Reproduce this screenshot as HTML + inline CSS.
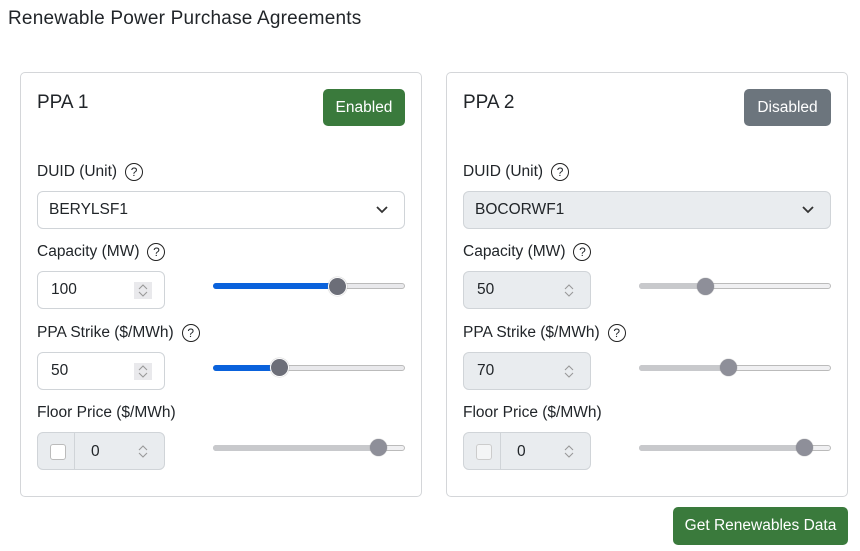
<!DOCTYPE html>
<html><head><meta charset="utf-8"><style>
*{box-sizing:border-box;margin:0;padding:0}
body{width:860px;height:551px;background:#fff;font-family:"Liberation Sans",Arial,sans-serif;color:#212529;position:relative;overflow:hidden}
.a{position:absolute}
.title{left:8px;top:8px;font-size:19px;letter-spacing:0.2px}
.card{border:1px solid #d4d6d9;border-radius:5px;background:#fff}
.h{font-size:19px}
.btn{color:#fff;font-size:15.5px;border-radius:5px;display:flex;align-items:center;justify-content:center}
.lbl{font-size:15.5px;display:flex;align-items:center;gap:8px}
.q{width:18px;height:18px;border:1.5px solid #222;border-radius:50%;font-size:12px;display:flex;align-items:center;justify-content:center}
.inp{border:1px solid #d0d4d8;border-radius:6px;font-size:15.5px;display:flex;align-items:center}
.dis{background:#e9ecef}
.spin{position:absolute;right:12px;top:10px;width:18px;height:17px}
.track{height:6px;border-radius:3px;border:1px solid #bbb;background:#e9e9ec}
.thumb{width:19px;height:19px;border-radius:50%;background:#6c6e78;border:1.5px solid #fff;box-shadow:0 0 1px #888}
</style></head><body>
<svg width="0" height="0" style="position:absolute"><defs><g id="sp"><path d="M5 7l4-4 4 4M5 10l4 4 4-4" fill="none" stroke="#999" stroke-width="1.1"/></g></defs></svg>
<div class="a title">Renewable Power Purchase Agreements</div>

<!-- Card 1 -->
<div class="a card" style="left:20px;top:72px;width:402px;height:425px"></div>
<div class="a h" style="left:37px;top:92px">PPA 1</div>
<div class="a btn" style="left:323px;top:89px;width:82px;height:37px;background:#3a7a3c">Enabled</div>
<div class="a lbl" style="left:37px;top:163px">DUID (Unit) <span class="q">?</span></div>
<div class="a inp" style="left:37px;top:191px;width:368px;height:38px;padding-left:11px">BERYLSF1
<svg class="a" style="right:16px;top:14px" width="12" height="8" viewBox="0 0 12 8"><path d="M1 1l5 5 5-5" fill="none" stroke="#333" stroke-width="1.8"/></svg></div>
<div class="a lbl" style="left:37px;top:243px">Capacity (MW) <span class="q">?</span></div>
<div class="a inp" style="left:37px;top:271px;width:128px;height:38px;padding-left:13px">100<svg class="spin" viewBox="0 0 18 17" style="background:#e9e9ec"><use href="#sp"/></svg></div>
<div class="a track" style="left:213px;top:283px;width:192px"></div>
<div class="a" style="left:213px;top:283px;width:125px;height:6px;border-radius:3px;background:#0a62dc"></div>
<div class="a thumb" style="left:328px;top:277px"></div>
<div class="a lbl" style="left:37px;top:324px">PPA Strike ($/MWh) <span class="q">?</span></div>
<div class="a inp" style="left:37px;top:352px;width:128px;height:38px;padding-left:13px">50<svg class="spin" viewBox="0 0 18 17" style="background:#e9e9ec"><use href="#sp"/></svg></div>
<div class="a track" style="left:213px;top:365px;width:192px"></div>
<div class="a" style="left:213px;top:365px;width:67px;height:6px;border-radius:3px;background:#0a62dc"></div>
<div class="a thumb" style="left:270px;top:358px"></div>
<div class="a lbl" style="left:37px;top:404px">Floor Price ($/MWh)</div>
<div class="a inp dis" style="left:37px;top:432px;width:128px;height:38px"><div class="a" style="left:12px;top:11px;width:16px;height:16px;border:1px solid #bbb;border-radius:3px;background:#fff"></div><div class="a" style="left:36px;top:0;width:1px;height:36px;background:#d0d4d8"></div><span class="a" style="left:53px;top:10px">0</span><svg class="spin" viewBox="0 0 18 17"><use href="#sp"/></svg></div>
<div class="a track" style="left:213px;top:445px;width:192px;background:#f0f0f2"></div>
<div class="a" style="left:213px;top:445px;width:166px;height:6px;border-radius:3px;background:#c8c9cc"></div>
<div class="a thumb" style="left:370px;top:439px;width:17px;height:17px;background:#8e8f99;border:none"></div>

<!-- Card 2 -->
<div class="a card" style="left:446px;top:72px;width:402px;height:425px"></div>
<div class="a h" style="left:463px;top:92px">PPA 2</div>
<div class="a btn" style="left:744px;top:89px;width:87px;height:37px;background:#6c757d">Disabled</div>
<div class="a lbl" style="left:463px;top:163px">DUID (Unit) <span class="q">?</span></div>
<div class="a inp dis" style="left:463px;top:191px;width:368px;height:38px;padding-left:11px">BOCORWF1
<svg class="a" style="right:16px;top:14px" width="12" height="8" viewBox="0 0 12 8"><path d="M1 1l5 5 5-5" fill="none" stroke="#333" stroke-width="1.8"/></svg></div>
<div class="a lbl" style="left:463px;top:243px">Capacity (MW) <span class="q">?</span></div>
<div class="a inp dis" style="left:463px;top:271px;width:128px;height:38px;padding-left:13px">50<svg class="spin" viewBox="0 0 18 17"><use href="#sp"/></svg></div>
<div class="a track" style="left:639px;top:283px;width:192px;background:#f0f0f2"></div>
<div class="a" style="left:639px;top:283px;width:67px;height:6px;border-radius:3px;background:#c8c9cc"></div>
<div class="a thumb" style="left:697px;top:278px;width:17px;height:17px;background:#8e8f99;border:none"></div>
<div class="a lbl" style="left:463px;top:324px">PPA Strike ($/MWh) <span class="q">?</span></div>
<div class="a inp dis" style="left:463px;top:352px;width:128px;height:38px;padding-left:13px">70<svg class="spin" viewBox="0 0 18 17"><use href="#sp"/></svg></div>
<div class="a track" style="left:639px;top:365px;width:192px;background:#f0f0f2"></div>
<div class="a" style="left:639px;top:365px;width:90px;height:6px;border-radius:3px;background:#c8c9cc"></div>
<div class="a thumb" style="left:720px;top:359px;width:17px;height:17px;background:#8e8f99;border:none"></div>
<div class="a lbl" style="left:463px;top:404px">Floor Price ($/MWh)</div>
<div class="a inp dis" style="left:463px;top:432px;width:128px;height:38px"><div class="a" style="left:12px;top:11px;width:16px;height:16px;border:1px solid #ccc;border-radius:3px;background:#f4f5f6"></div><div class="a" style="left:36px;top:0;width:1px;height:36px;background:#d0d4d8"></div><span class="a" style="left:53px;top:10px">0</span><svg class="spin" viewBox="0 0 18 17"><use href="#sp"/></svg></div>
<div class="a track" style="left:639px;top:445px;width:192px;background:#f0f0f2"></div>
<div class="a" style="left:639px;top:445px;width:166px;height:6px;border-radius:3px;background:#c8c9cc"></div>
<div class="a thumb" style="left:796px;top:439px;width:17px;height:17px;background:#8e8f99;border:none"></div>

<div class="a btn" style="left:673px;top:507px;width:175px;height:38px;background:#3a7a3c">Get Renewables Data</div>
</body></html>
